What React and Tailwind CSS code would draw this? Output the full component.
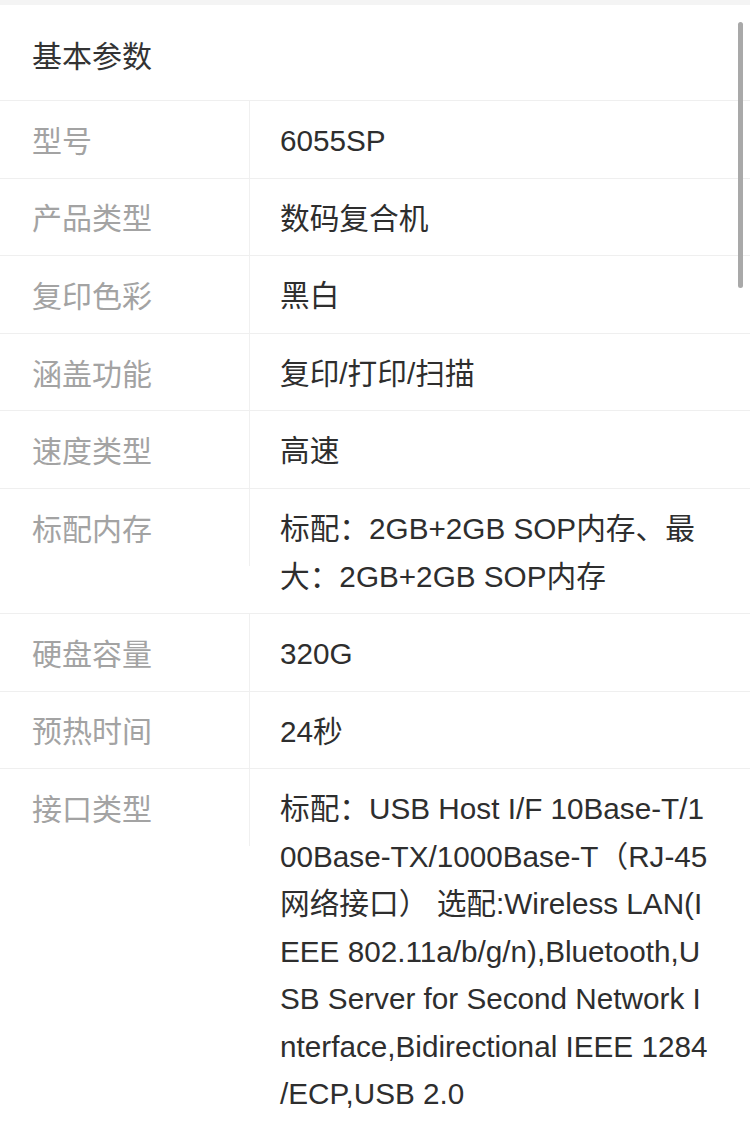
import React from 'react';

const specs = [
  { label: '型号', value: '6055SP' },
  { label: '产品类型', value: '数码复合机' },
  { label: '复印色彩', value: '黑白' },
  { label: '涵盖功能', value: '复印/打印/扫描' },
  { label: '速度类型', value: '高速' },
  { label: '标配内存', value: '标配：2GB+2GB SOP内存、最大：2GB+2GB SOP内存' },
  { label: '硬盘容量', value: '320G' },
  { label: '预热时间', value: '24秒' },
  {
    label: '接口类型',
    // zero-width space lets the line break before "/ECP" like the source page
    value:
      '标配：USB Host I/F 10Base-T/100Base-TX/1000Base-T（RJ-45网络接口） 选配:Wireless LAN(IEEE 802.11a/b/g/n),Bluetooth,USB Server for Second Network Interface,Bidirectional IEEE 1284\u200B/ECP,USB 2.0',
  },
];

export default function App() {
  return (
    <div
      className="relative min-h-[1140px] w-[750px] overflow-hidden bg-white"
      style={{ fontFamily: '"Liberation Sans", "Noto Sans CJK SC", sans-serif' }}
    >
      {/* top strip */}
      <div className="h-[5px] bg-[#f4f4f4]" />

      {/* section title */}
      <div className="flex h-[96px] items-center border-b border-[#efefef] pl-[32px] pt-[8px] text-[30px] text-[#333]">
        基本参数
      </div>

      {/* spec rows */}
      {specs.map((row, i) => (
        <div
          key={row.label}
          className={i === specs.length - 1 ? 'flex items-start' : 'flex items-start border-b border-[#efefef]'}
        >
          <div className="flex h-[76.6px] w-[250px] shrink-0 items-center border-r border-[#f0f0f0] pl-[32px] pt-[4px] text-[30px] text-[#a3a3a3]">
            {row.label}
          </div>
          <div className="min-w-0 flex-1 pb-[13px] pl-[30px] pr-[37px] pt-[16.1px] text-[29.7px] leading-[47.5px] text-[#2e2e2e] break-all">
            {row.value}
          </div>
        </div>
      ))}

      {/* overlay scrollbar */}
      <div className="absolute left-[738px] top-[22px] h-[266px] w-[5px] rounded-full bg-[#a9a9a9]" />
    </div>
  );
}
